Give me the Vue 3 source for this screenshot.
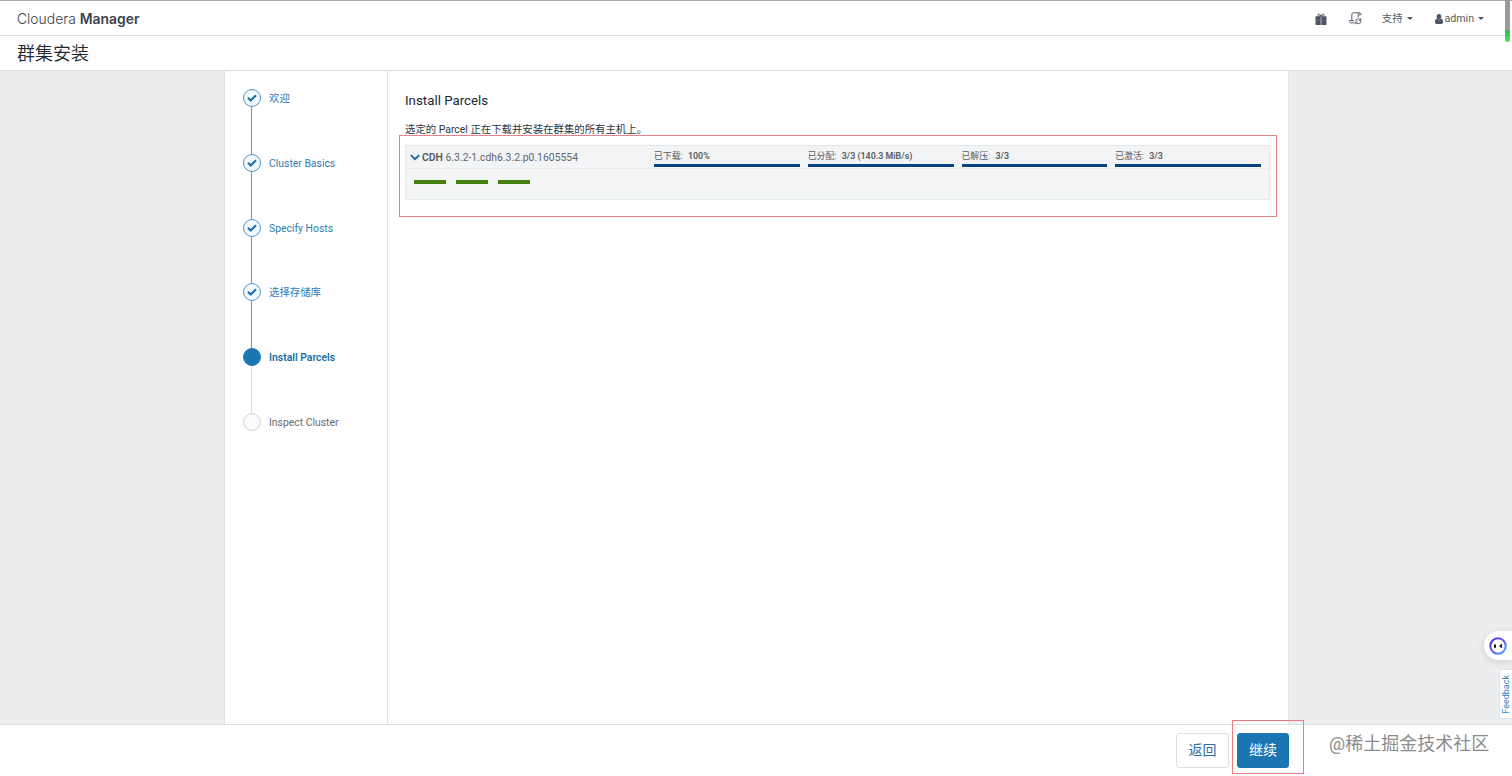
<template>
  <div class="page">
    <header class="navbar">
      <div class="brand"><span>Cloudera</span> <b>Manager</b></div>
      <nav class="nav-links">
        <a class="nav-gift">
          <svg width="12" height="12" viewBox="0 0 12 12">
            <path
              d="M1 3.200h4.700V12H1l-.5-.5V3.700zM6.300 3.200H11l.5.500v7.800l-.5.500H6.300z"
              fill="#4c5561"
            />
            <path d="M.5 7.200h11" stroke="#7d848c" stroke-width=".5" />
            <path
              d="M6 3.200C5 1.300 4.200.8 3.500 1.100c-.8.500-.5 1.900.8 2h3.400c1.300-.1 1.600-1.500.8-2C7.800.8 7 1.300 6 3.200z"
              fill="none"
              stroke="#4c5561"
              stroke-width="1"
            />
          </svg>
        </a>
        <a class="nav-commands">
          <svg width="13" height="13" viewBox="0 0 13 13" fill="none" stroke="#59616c" stroke-width="1">
            <path d="M6 10.900H2.200C.9 10.900.4 9.900.6 8.600h4.600M2.800 8.600V3c0-1.500.5-2.200 1.600-2.200h6.200c-1 .2-1.300.9-1.300 2.200v2.400" />
            <path d="M10.600.8c1 .1 1.300 1 1.100 2.100H9.300" />
            <circle cx="9.300" cy="9.200" r="2.500" stroke-dasharray="6.200 1.600" />
            <path d="M11.900 6.300v2.200H9.800M6.900 12.200V10h2" />
          </svg>
        </a>
        <a class="nav-support">支持<i class="caret"></i></a>
        <a class="nav-user">
          <svg width="8" height="10" viewBox="0 0 8 10" fill="#4c5561">
            <ellipse cx="4" cy="2.700" rx="2.300" ry="2.700" />
            <path d="M1.900 4.600C.6 4.900 0 6 0 8c0 1.300.6 2 1.600 2h4.800C7.400 10 8 9.300 8 8c0-2-.6-3.100-1.900-3.400-1.100 1.200-3.100 1.200-4.200 0z" />
          </svg>
          <span>admin</span><i class="caret"></i>
        </a>
      </nav>
    </header>

    <div class="title-bar"><h1>群集安装</h1></div>

    <main class="content">
      <div class="wizard">
        <ol class="steps">
          <li v-for="step in steps" :key="step.label" class="step" :class="step.state">
            <span class="step-mark">
              <svg v-if="step.state === 'done'" width="10" height="8" viewBox="0 0 10 8">
                <path d="M1 3.700l2.700 2.700L9 1.200" fill="none" stroke="#1b6ea8" stroke-width="2.100" />
              </svg>
            </span>
            <span class="step-label">{{ step.label }}</span>
          </li>
        </ol>

        <section class="panel">
          <h2>Install Parcels</h2>
          <p class="intro">选定的 Parcel 正在下载并安装在群集的所有主机上。</p>

          <div class="highlight">
            <div class="parcel">
              <div class="parcel-head">
                <div class="parcel-name">
                  <svg width="10" height="7" viewBox="0 0 10 7">
                    <path d="M.8 1.100L5 5.200l4.200-4.100" fill="none" stroke="#1b6ea8" stroke-width="2" />
                  </svg>
                  <span><b>CDH</b> 6.3.2-1.cdh6.3.2.p0.1605554</span>
                </div>
                <div v-for="item in progress" :key="item.label" class="progress">
                  <div class="progress-text">{{ item.label }}: <b>{{ item.value }}</b></div>
                  <div class="progress-track">
                    <div class="progress-bar" :style="{ width: item.percent + '%' }"></div>
                  </div>
                </div>
              </div>
              <div class="hosts">
                <span v-for="n in 3" :key="n" class="host"></span>
              </div>
            </div>
          </div>
        </section>
      </div>
    </main>

    <footer class="actions">
      <button class="btn">返回</button>
      <div class="highlight-next">
        <button class="btn primary">继续</button>
      </div>
      <span class="watermark">@稀土掘金技术社区</span>
    </footer>

    <div class="scroll-mark"></div>
    <div class="assistant">
      <svg width="18" height="18" viewBox="0 0 18 18">
        <defs>
          <linearGradient id="ring" x1="0" y1="0" x2="1" y2="1">
            <stop offset="0.200" stop-color="#5a3cf0" />
            <stop offset="0.550" stop-color="#6a5cf2" />
            <stop offset="1" stop-color="#35b4f4" />
          </linearGradient>
        </defs>
        <circle cx="9" cy="9" r="7.700" fill="#fff" stroke="url(#ring)" stroke-width="2" />
        <path d="M6 7.400v3.400" stroke="#151515" stroke-width="2" />
        <path d="M13 7.400L11.200 9.100l1.800 1.700" fill="none" stroke="#151515" stroke-width="1.500" />
      </svg>
    </div>
    <div class="feedback"><span>Feedback</span></div>
  </div>
</template>

<script setup>
import { ref } from 'vue';

const steps = ref([
  { label: '欢迎', state: 'done' },
  { label: 'Cluster Basics', state: 'done' },
  { label: 'Specify Hosts', state: 'done' },
  { label: '选择存储库', state: 'done' },
  { label: 'Install Parcels', state: 'current' },
  { label: 'Inspect Cluster', state: 'pending' }
]);

const progress = ref([
  { label: '已下载', value: '100%', percent: 100 },
  { label: '已分配', value: '3/3 (140.3 MiB/s)', percent: 100 },
  { label: '已解压', value: '3/3', percent: 100 },
  { label: '已激活', value: '3/3', percent: 100 }
]);
</script>

<style>
body {
  margin: 0;
  overflow: hidden;
}
</style>

<style scoped>
* {
  box-sizing: border-box;
}

.page {
  position: relative;
  display: flex;
  flex-direction: column;
  height: 100vh;
  background: #fff;
  color: #2c353f;
  font-family: Roboto, "Noto Sans CJK SC", sans-serif;
  font-size: 10.4px;
  overflow: hidden;
}

.navbar {
  display: flex;
  justify-content: space-between;
  align-items: center;
  height: 36px;
  padding: 1px 28px 0 17px;
  border-top: 1px solid #a9a9ab;
  border-bottom: 1px solid #dfe1e2;
}

.brand {
  font-family: Inter, sans-serif;
  font-size: 13.9px;
  line-height: 18px;
  color: #3a434d;
}

.brand span {
  font-weight: 300;
}

.brand b {
  font-weight: 600;
}

.nav-links {
  display: flex;
  align-items: center;
  line-height: 16px;
  color: #555d67;
}

.nav-links a {
  display: flex;
  align-items: center;
}

.nav-gift {
  margin-right: 22px;
}

.nav-commands {
  margin-right: 20px;
}

.nav-support {
  margin-right: 22px;
}

.nav-user svg {
  margin-right: 2px;
}

.nav-user span {
  font-size: 10.6px;
}

.caret {
  margin-left: 4px;
  border: 3px solid transparent;
  border-top-color: #4c5561;
  border-bottom: 0;
}

.title-bar {
  display: flex;
  align-items: center;
  height: 35px;
  padding: 2px 0 0 17px;
  border-bottom: 1px solid #d9dcde;
}

h1 {
  margin: 0;
  font-size: 18px;
  line-height: 24px;
  font-weight: 350;
  color: #20272f;
}

.content {
  display: flex;
  flex: 1;
  background: #ecedef;
}

.wizard {
  display: flex;
  width: 1065px;
  margin-left: 224px;
  background: #fff;
  border-left: 1px solid #dfe2e4;
  border-right: 1px solid #dfe2e4;
}

.steps {
  width: 163px;
  margin: 0;
  padding: 18px 0 0 18px;
  list-style: none;
  border-right: 1px solid #dddfe1;
}

.step {
  position: relative;
  display: flex;
  align-items: flex-start;
  height: 64.8px;
  line-height: 20px;
  color: #2f79b5;
}

/* line that joins a step to the next one */
.step:not(:last-child)::before {
  content: '';
  position: absolute;
  left: 8px;
  top: 18px;
  bottom: 0;
  width: 1px;
  background: #5c9bc4;
}

.step.current::before {
  background: #dcdedf !important;
}

.step-mark {
  display: flex;
  align-items: center;
  justify-content: center;
  width: 18px;
  height: 18px;
  margin-right: 8px;
  border: 1px solid #5596bd;
  border-radius: 50%;
  background: #f1f9fd;
}

.current .step-mark {
  background: #1b75b0;
  border-color: #1b75b0;
}

.current .step-label {
  font-weight: 600;
  color: #1b6ea8;
}

.pending .step-mark {
  background: #fafcfc;
  border-color: #cfd2d4;
}

.pending .step-label {
  color: #666b71;
}

.panel {
  flex: 1;
  padding: 20px 10px 0 11px;
}

h2 {
  margin: 0 0 10px 6px;
  font-size: 13.3px;
  line-height: 20px;
  font-weight: 400;
  color: #20272f;
}

.intro {
  margin: 0 0 0 6px;
  height: 14px;
  line-height: 18px;
  color: #2c353f;
}

.highlight {
  width: 878px;
  height: 82px;
  padding: 9px 6px 9px 5px;
  border: 1px solid #e58187;
}

.parcel {
  height: 55px;
  background: #f3f4f5;
  border: 1px solid #e3e7e8;
}

.parcel-head {
  display: flex;
  gap: 8px;
  height: 23px;
  padding: 0 8px 0 4px;
  border-bottom: 1px solid #e8eaeb;
}

.parcel-name {
  display: flex;
  align-items: center;
  gap: 2px;
  width: 236px;
  color: #5f666e;
}

.parcel-name b {
  font-weight: 600;
  color: #505860;
}

.progress {
  flex: 1;
  padding-top: 3px;
}

.progress-text {
  height: 15px;
  line-height: 14px;
  font-size: 8.9px;
  white-space: nowrap;
  color: #555c64;
}

.progress-text b {
  margin-left: 3px;
  font-weight: 600;
}

.progress-track {
  height: 3px;
  background: #d8dcdf;
}

.progress-bar {
  height: 3px;
  background: #07447c;
}

.hosts {
  display: flex;
  gap: 10px;
  padding: 11px 8px;
}

.host {
  width: 32px;
  height: 4px;
  background: #45800f;
}

.actions {
  display: flex;
  align-items: flex-start;
  height: 52px;
  padding-left: 1176px;
  border-top: 1px solid #dfe2e4;
}

.btn {
  flex: none;
  width: 53px;
  height: 35px;
  margin-top: 8px;
  padding: 0 0 2px;
  border: 1px solid #dde0e2;
  border-radius: 3px;
  background: #fff;
  font-family: inherit;
  font-size: 14px;
  line-height: 20px;
  color: #2a6fa8;
}

.highlight-next {
  flex: none;
  width: 72px;
  height: 54px;
  margin: -5px 25px 0 3px;
  padding: 12px 0 0 4px;
  border: 1px solid #ea7c80;
}

.btn.primary {
  display: block;
  width: 52px;
  height: 35px;
  margin: 0;
  border-color: #1b75b0;
  background: #1b75b0;
  color: #fff;
}

.watermark {
  margin-top: 6px;
  font-size: 18px;
  line-height: 26px;
  white-space: nowrap;
  color: #8c8c8c;
}

.scroll-mark {
  position: absolute;
  top: 0;
  right: 2px;
  width: 5px;
  height: 42px;
  border-radius: 0 0 3px 3px;
  background: linear-gradient(#9b9b9b 30px, #2fb75d 30px, #4ce468 42px);
}

.assistant {
  position: absolute;
  right: 0;
  top: 631px;
  display: flex;
  align-items: center;
  width: 28px;
  height: 29px;
  padding-left: 5px;
  border-radius: 15px 0 0 15px;
  background: #fff;
  box-shadow: 0 2px 8px rgba(0, 0, 0, 0.12);
}

.feedback {
  position: absolute;
  right: 0;
  top: 669px;
  display: flex;
  align-items: center;
  justify-content: center;
  width: 13px;
  height: 50px;
  border: 1px solid #dfe4e8;
  border-right: 0;
  border-radius: 3px 0 0 3px;
  background: #fff;
}

.feedback span {
  writing-mode: vertical-rl;
  transform: rotate(180deg);
  font-size: 9px;
  line-height: 10px;
  color: #2f86bd;
}
</style>
